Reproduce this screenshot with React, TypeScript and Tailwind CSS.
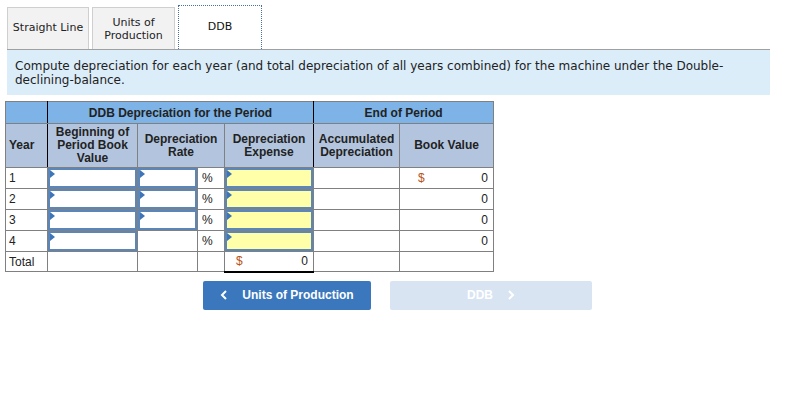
import React from "react";

const verd = { fontFamily: '"DejaVu Sans", Verdana, sans-serif' };

function Tri() {
  return (
    <span className="absolute left-0 top-0 w-0 h-0 border-t-[4px] border-b-[4px] border-l-[5px] border-t-transparent border-b-transparent border-l-[#3e74b8]" />
  );
}

function InputCell({ yellow }: { yellow?: boolean }) {
  return (
    <td className="p-0 border border-[#808080]">
      <div className={`relative h-[20px] border-2 border-[#5d86b8] ${yellow ? "bg-[#ffffaa]" : "bg-white"}`}>
        <Tri />
      </div>
    </td>
  );
}

export default function App() {
  const rows = [1, 2, 3, 4];
  return (
    <div className="w-[797px] h-[394px] bg-white relative" style={{ fontFamily: '"Liberation Sans", Arial, sans-serif' }}>
      <div className="pt-[5px] pl-[7px] flex items-end gap-[3px] h-[49px]" style={verd}>
        <div className="w-[82px] h-[42px] bg-[#f2f2f2] border border-[#cfcfcf] border-b-0 flex items-center justify-center text-[11px] text-[#222]">Straight Line</div>
        <div className="w-[83px] h-[42px] bg-[#f2f2f2] border border-[#cfcfcf] border-b-0 flex items-center justify-center text-center leading-[13px] text-[11px] text-[#222]">Units of<br />Production</div>
        <div className="w-[84px] h-[44px] bg-white border border-dotted border-[#4a6fa8] border-b-0 flex items-center justify-center text-[11px] text-[#111]">DDB</div>
      </div>
      <div className="ml-[7px] w-[763px] h-[46px] bg-[#dcedfa] border-t border-[#a0a0a0] pl-[8px] pr-[28px] pt-[9px] text-[12px] leading-[14px] text-[#222]" style={verd}>
        Compute depreciation for each year (and total depreciation of all years combined) for the machine under the Double-declining-balance.
      </div>
      <table className="ml-[5px] mt-[6px] border-collapse table-fixed text-[12px] text-[#222]" style={{ width: 488 }}>
        <colgroup>
          <col style={{ width: 42 }} />
          <col style={{ width: 90 }} />
          <col style={{ width: 60 }} />
          <col style={{ width: 27 }} />
          <col style={{ width: 89 }} />
          <col style={{ width: 86 }} />
          <col style={{ width: 94 }} />
        </colgroup>
        <thead>
          <tr className="h-[22px] bg-[#7db3e6] font-bold">
            <th className="border border-[#808080] border-r-black"></th>
            <th colSpan={4} className="border border-[#808080] border-r-black font-bold text-center">DDB Depreciation for the Period</th>
            <th colSpan={2} className="border border-[#808080] font-bold text-center">End of Period</th>
          </tr>
          <tr className="h-[44px] bg-[#b3c5de] leading-[13px]">
            <th className="border border-[#808080] border-r-black text-left pl-[3px] font-bold">Year</th>
            <th className="border border-[#808080] font-bold text-center">Beginning of<br />Period Book<br />Value</th>
            <th colSpan={2} className="border border-[#808080] font-bold text-center">Depreciation<br />Rate</th>
            <th className="border border-[#808080] border-r-black font-bold text-center">Depreciation<br />Expense</th>
            <th className="border border-[#808080] font-bold text-center">Accumulated<br />Depreciation</th>
            <th className="border border-[#808080] font-bold text-center">Book Value</th>
          </tr>
        </thead>
        <tbody>
          {rows.map((r) => (
            <tr key={r} className="h-[21px]">
              <td className="border border-[#808080] pl-[3px] py-0 text-[#222]">{r}</td>
              <InputCell />
              {r < 4 ? <InputCell /> : <td className="border border-[#808080]"></td>}
              <td className="border border-[#808080] pl-[4px] py-0">%</td>
              <InputCell yellow />
              <td className="border border-[#808080]"></td>
              <td className="border border-[#808080] px-[5px] py-0">
                <div className="flex justify-between">
                  <span className="text-[#b8541a] pl-[13px]">{r === 1 ? "$" : ""}</span>
                  <span>0</span>
                </div>
              </td>
            </tr>
          ))}
          <tr className="h-[20px]">
            <td className="border border-[#808080] pl-[3px] py-0">Total</td>
            <td className="border border-[#808080]"></td>
            <td className="border border-[#808080]"></td>
            <td className="border border-[#808080]"></td>
            <td className="border border-[#808080] border-b-2 border-b-black px-[5px] py-0">
              <div className="flex justify-between">
                <span className="text-[#b8541a] pl-[6px]">$</span>
                <span>0</span>
              </div>
            </td>
            <td className="border border-[#808080]"></td>
            <td className="border border-[#808080]"></td>
          </tr>
        </tbody>
      </table>
      <div className="flex ml-[203px] mt-[8px] gap-[19px]">
        <div className="w-[168px] h-[29px] bg-[#3a77bd] rounded-[2px] flex items-center justify-center text-white font-bold text-[12px] gap-[14px]">
          <svg width="8" height="10" viewBox="0 0 8 10"><path d="M6 1 L2 5 L6 9" stroke="white" strokeWidth="2" fill="none" /></svg>
          <span>Units of Production</span>
        </div>
        <div className="w-[202px] h-[29px] bg-[#d8e4f2] rounded-[2px] flex items-center justify-center text-white font-bold text-[12px] gap-[14px]">
          <span>DDB</span>
          <svg width="8" height="10" viewBox="0 0 8 10"><path d="M2 1 L6 5 L2 9" stroke="white" strokeWidth="2" fill="none" /></svg>
        </div>
      </div>
    </div>
  );
}
